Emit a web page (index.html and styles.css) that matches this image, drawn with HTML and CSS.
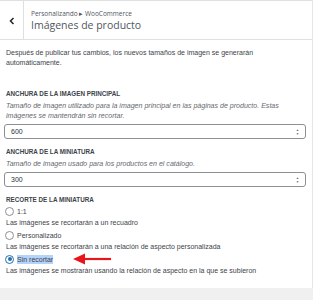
FILE: index.html
```html
<!DOCTYPE html>
<html lang="es">
<head>
    <meta charset="UTF-8">
    <title>Imágenes de producto</title>
    <link rel="stylesheet" href="styles.css">
</head>
<body>
    <div class="header">
        <div class="back">
            <svg width="6" height="8" viewBox="0 0 6 8"><path d="M4.5 1 L1.5 4 L4.5 7" fill="none" stroke="#1d2327" stroke-width="1.5"/></svg>
        </div>
        <div class="titles">
            <div class="crumb">Personalizando &#9656; WooCommerce</div>
            <div class="title">Imágenes de producto</div>
        </div>
    </div>

    <div class="panel">
        <p class="intro">Después de publicar tus cambios, los nuevos tamaños de imagen se generarán automáticamente.</p>

        <div class="field">
            <div class="label">Anchura de la imagen principal</div>
            <div class="desc">Tamaño de imagen utilizado para la imagen principal en las páginas de producto. Estas imágenes se mantendrán sin recortar.</div>
            <div class="number">
                <span>600</span>
                <span class="spin">&#9650;<br>&#9660;</span>
            </div>
        </div>

        <div class="field">
            <div class="label">Anchura de la miniatura</div>
            <div class="desc">Tamaño de imagen usado para los productos en el catálogo.</div>
            <div class="number">
                <span>300</span>
                <span class="spin">&#9650;<br>&#9660;</span>
            </div>
        </div>

        <div class="field radios">
            <div class="label">Recorte de la miniatura</div>
            <div class="option">
                <div class="radio-row"><span class="radio"></span><span>1:1</span></div>
                <div class="option-desc">Las imágenes se recortarán a un recuadro</div>
            </div>
            <div class="option">
                <div class="radio-row"><span class="radio"></span><span>Personalizado</span></div>
                <div class="option-desc">Las imágenes se recortarán a una relación de aspecto personalizada</div>
            </div>
            <div class="option">
                <div class="radio-row">
                    <span class="radio checked"></span><span class="selected">Sin recortar</span>
                    <svg class="arrow" width="39" height="12" viewBox="0 0 39 12"><path d="M38 6 H10" stroke="#e8151b" stroke-width="2.2"/><path d="M0 6 L12 0.5 L12 11.5 Z" fill="#e8151b"/></svg>
                </div>
                <div class="option-desc">Las imágenes se mostrarán usando la relación de aspecto en la que se subieron</div>
            </div>
        </div>
    </div>

    <div class="footer"></div>
</body>
</html>
```

FILE: styles.css
```css
body {
    margin: 0;
    width: 313px;
    height: 300px;
    overflow: hidden;
    background: #fff;
    font-family: "Liberation Sans", Arial, sans-serif;
    color: #3c434a;
    display: flex;
    flex-direction: column;
}
.header {
    height: 38px;
    border-top: 1px solid #e0e0e0;
    border-bottom: 1px solid #e0e0e0;
    border-right: 1px solid #e6e6e6;
    display: flex;
    flex-shrink: 0;
}
.back {
    width: 23px;
    border-right: 1px solid #e0e0e0;
    display: flex;
    align-items: center;
    justify-content: center;
    padding-top: 1px;
}
.titles {
    padding-left: 7px;
    display: flex;
    flex-direction: column;
    justify-content: center;
    font-family: "Open Sans", sans-serif;
    color: #50575e;
}
.crumb {
    font-size: 6.5px;
    line-height: 9px;
}
.title {
    font-size: 10.5px;
    line-height: 14px;
}
.panel {
    flex: 1;
    padding: 8px 6px 0 6px;
    border-right: 1px solid #e6e6e6;
}
.intro {
    margin: 0 0 21px 0;
    font-size: 7px;
    line-height: 10px;
}
.field {
    margin-bottom: 8px;
}
.label {
    text-transform: uppercase;
    font-size: 6.3px;
    font-weight: bold;
    color: #3c434a;
    line-height: 10px;
    margin-bottom: 2px;
}
.desc {
    font-style: italic;
    font-size: 7.05px;
    line-height: 10px;
    color: #646970;
    margin-bottom: 3px;
    padding-right: 8px;
}
.number {
    margin-left: -2px;
    height: 13px;
    border: 1px solid #8c8f94;
    border-radius: 3px;
    display: flex;
    align-items: center;
    justify-content: space-between;
    padding: 0 6px;
    font-size: 7px;
    color: #2c3338;
}
.spin {
    font-size: 3px;
    line-height: 4px;
    color: #555;
    text-align: center;
}
.radios .label {
    margin-bottom: 0;
}
.option {
    font-size: 7px;
}
.radio-row {
    display: flex;
    align-items: center;
    gap: 3px;
    height: 12px;
}
.radio {
    width: 9px;
    height: 9px;
    border: 1px solid #8c8f94;
    border-radius: 50%;
    box-sizing: border-box;
    display: flex;
    align-items: center;
    justify-content: center;
    margin-left: -1px;
}
.radio.checked {
    border-color: #2271b1;
}
.radio.checked::after {
    content: "";
    width: 4px;
    height: 4px;
    border-radius: 50%;
    background: #2271b1;
}
.selected {
    background: #b4d3fb;
    padding: 1px 0;
}
.arrow {
    margin-left: 17px;
}
.option-desc {
    line-height: 12px;
    color: #3c434a;
}
.footer {
    height: 12px;
    background: #f0f0f1;
    flex-shrink: 0;
}
```
